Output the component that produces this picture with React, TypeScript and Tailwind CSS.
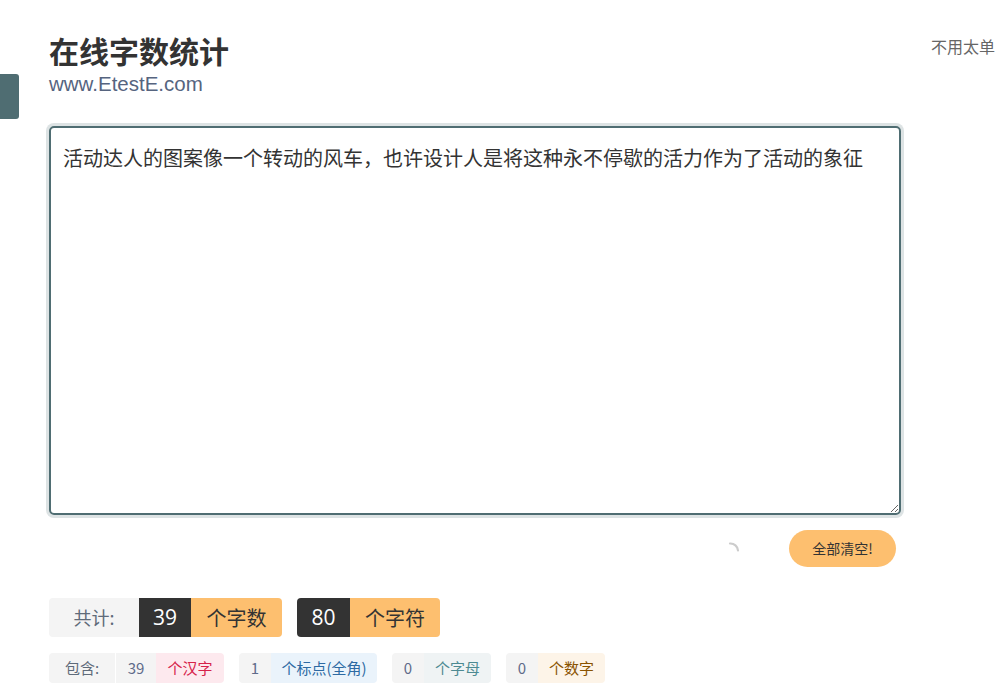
import React, { useState } from "react";

const cjk = "font-['Noto_Sans_CJK_SC','Noto_Sans',sans-serif]";

export default function App() {
  const [text, setText] = useState(
    "活动达人的图案像一个转动的风车，也许设计人是将这种永不停歇的活力作为了活动的象征"
  );

  return (
    <div className={`relative min-h-[686px] w-[996px] overflow-hidden bg-white ${cjk}`}>
      {/* side tab */}
      <div className="absolute left-0 top-[74px] h-[45px] w-[19px] rounded-r-[3px] bg-[#4f6d72]" />

      {/* top right hint */}
      <div className="absolute right-[1px] top-[35px] text-[16px] leading-[22px] text-[#666] whitespace-nowrap">
        不用太单
      </div>

      <div className="w-[852px] ml-[49px] pt-[29px]">
        <h1 className="text-[30px] leading-[42px] font-bold text-[#333]">在线字数统计</h1>
        <p className="mt-[1px] text-[20.5px] leading-[24px] text-[#56647f] font-['Liberation_Sans',sans-serif]">
          www.EtestE.com
        </p>

        <textarea
          value={text}
          onChange={(e) => setText(e.target.value)}
          className="mt-[30px] block h-[389px] w-full resize-y rounded-[5px] border-2 border-[#4f6d72] px-[12px] py-[16px] text-[20px] leading-[28px] text-[#333] outline-none ring-[3px] ring-[#dde3e4]"
        />

        <div className="mt-[15px] flex items-center justify-end">
          {/* spinner */}
          <svg width="20" height="20" viewBox="0 0 20 20" className="mr-[47px] mt-[4px]">
            <path d="M8 2.5 A7.5 7.5 0 0 1 16 9.5" fill="none" stroke="#cccccc" strokeWidth="2.2" strokeLinecap="round" />
          </svg>
          <button className="mr-[5px] h-[37px] w-[107px] rounded-full bg-[#fdbf6f] text-[14px] text-[#333]">
            全部清空!
          </button>
        </div>

        {/* totals */}
        <div className="mt-[31px] flex items-center gap-[15px]">
          <div className="flex h-[39px] overflow-hidden rounded-[4px]">
            <span className="flex w-[90px] items-center justify-center bg-[#f4f4f4] text-[18px] text-[#5f6b7a]">共计:</span>
            <span className="flex w-[52px] items-center justify-center bg-[#333] text-[21px] text-white font-['Open_Sans',sans-serif]">39</span>
            <span className="flex w-[91px] items-center justify-center bg-[#fdbf6f] text-[20px] text-[#333]">个字数</span>
          </div>
          <div className="flex h-[39px] overflow-hidden rounded-[4px]">
            <span className="flex w-[53px] items-center justify-center bg-[#333] text-[21px] text-white font-['Open_Sans',sans-serif]">80</span>
            <span className="flex w-[90px] items-center justify-center bg-[#fdbf6f] text-[20px] text-[#333]">个字符</span>
          </div>
        </div>

        {/* details */}
        <div className="mt-[16px] flex items-center gap-[15px] text-[15px]">
          <div className="flex h-[30px] overflow-hidden rounded-[4px]">
            <span className="flex w-[67px] items-center justify-center bg-[#f4f4f4] text-[#5f6b7a] border-r border-white">包含:</span>
            <span className="flex w-[40px] items-center justify-center bg-[#f4f4f4] text-[#5f6b8a]">39</span>
            <span className="flex w-[68px] items-center justify-center bg-[#fde9ee] text-[#d6224a]">个汉字</span>
          </div>
          <div className="flex h-[30px] overflow-hidden rounded-[4px]">
            <span className="flex w-[32px] items-center justify-center bg-[#f4f4f4] text-[#5f6b8a]">1</span>
            <span className="flex w-[106px] items-center justify-center bg-[#eaf3fb] text-[#2d6aa3]">个标点(全角)</span>
          </div>
          <div className="flex h-[30px] overflow-hidden rounded-[4px]">
            <span className="flex w-[32px] items-center justify-center bg-[#f4f4f4] text-[#5f6b8a]">0</span>
            <span className="flex w-[67px] items-center justify-center bg-[#eff3f4] text-[#4d8a92]">个字母</span>
          </div>
          <div className="flex h-[30px] overflow-hidden rounded-[4px]">
            <span className="flex w-[32px] items-center justify-center bg-[#f4f4f4] text-[#5f6b8a]">0</span>
            <span className="flex w-[67px] items-center justify-center bg-[#fdf4e8] text-[#8a5300]">个数字</span>
          </div>
        </div>
      </div>
    </div>
  );
}
